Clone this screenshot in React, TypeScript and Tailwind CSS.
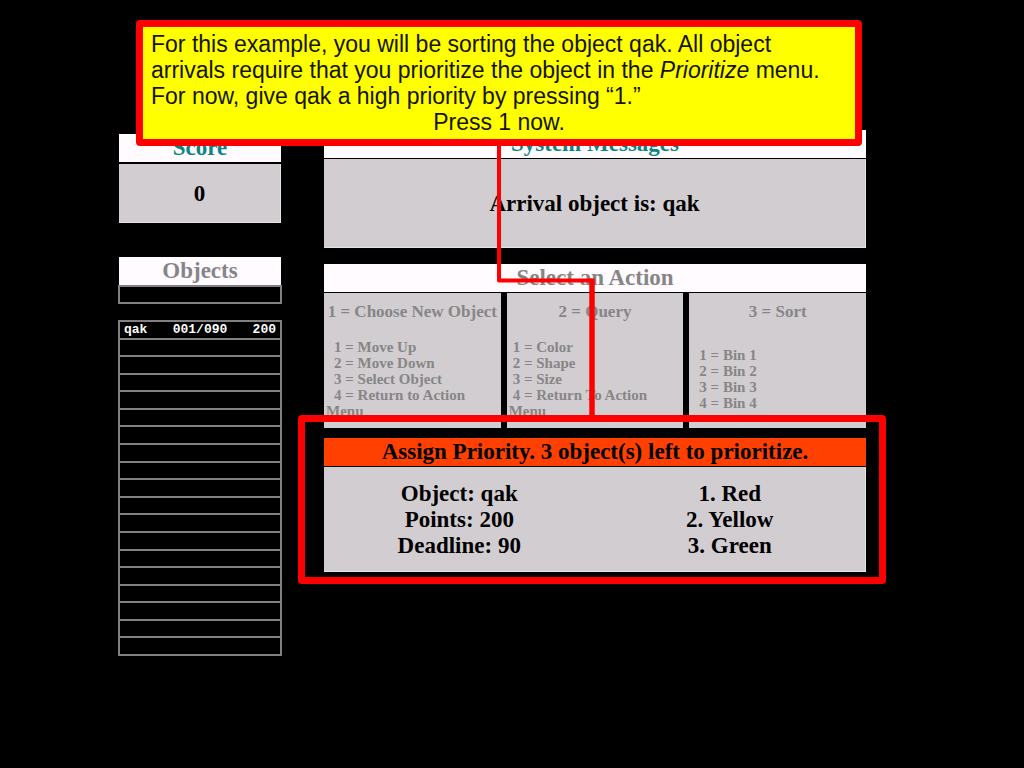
import React from "react";

const EMPTY_ROWS = 18;

const ACTIONS = [
  {
    title: "1 = Choose New Object",
    items: ["1 = Move Up", "2 = Move Down", "3 = Select Object", "4 = Return to Action Menu"],
    list: "pt-[17px] pl-0.5 pr-5 [&>li]:indent-2",
  },
  {
    title: "2 = Query",
    items: ["1 = Color", "2 = Shape", "3 = Size", "4 = Return To Action Menu"],
    list: "pt-[17px] pl-0.5 pr-5 [&>li]:indent-1",
  },
  {
    title: "3 = Sort",
    items: ["1 = Bin 1", "2 = Bin 2", "3 = Bin 3", "4 = Bin 4"],
    list: "pt-[25px] pl-2.5",
  },
];

function PanelTitle({ className, children }: { className: string; children: React.ReactNode }) {
  return <h2 className={`h-7 text-center text-[23px] leading-7 font-bold ${className}`}>{children}</h2>;
}

function ScorePanel() {
  return (
    <section className="mx-px">
      <PanelTitle className="bg-[#fffbff] text-[#0b8585]">Score</PanelTitle>
      <p className="mt-0.5 flex h-[59px] items-center justify-center border-r border-b border-[#e6e2e5] bg-[#d2cdd0] pt-0.5 text-[23px] font-bold">
        0
      </p>
    </section>
  );
}

function ObjectsPanel() {
  return (
    <section className="mt-[34px]">
      <div className="px-px">
        <PanelTitle className="bg-[#fffbff] text-[#868689]">Objects</PanelTitle>
      </div>
      <div className="h-[19px] border-2 border-[#828082]" />
      <table className="mt-4 h-[336px] w-full border-collapse border-2 border-[#828082] font-['Liberation_Mono',monospace] text-[13px] leading-[14px] font-bold text-white">
        <tbody>
          <tr className="h-[17px] border-2 border-[#828082]">
            <td className="p-0 pl-1">qak</td>
            <td className="p-0 text-center">001/090</td>
            <td className="p-0 pr-1 text-right">200</td>
          </tr>
          {Array.from({ length: EMPTY_ROWS }, (_, i) => (
            <tr key={i} className="h-[17px] border-2 border-[#828082]">
              <td colSpan={3} className="p-0" />
            </tr>
          ))}
        </tbody>
      </table>
    </section>
  );
}

function MessagesPanel() {
  return (
    <section>
      <PanelTitle className="bg-[#fffbff] text-[#0b8585]">System Messages</PanelTitle>
      <p className="mt-px flex h-[89px] items-center justify-center border-r border-b border-[#e6e2e5] bg-[#d2cdd0] pt-0.5 text-[23px] font-bold">
        Arrival object is: qak
      </p>
    </section>
  );
}

function ActionPanel() {
  return (
    <section className="mt-4 text-[#868686]">
      <PanelTitle className="bg-[#fffbff]">Select an Action</PanelTitle>
      <div className="mt-px grid grid-cols-3 gap-1.5">
        {ACTIONS.map((action) => (
          <div key={action.title} className="h-[135px] bg-[#d2cdd0] pt-[9px] font-bold">
            <h3 className="text-center text-[17px] leading-5 whitespace-nowrap">{action.title}</h3>
            <ul className={`text-[15px] leading-4 ${action.list}`}>
              {action.items.map((item) => (
                <li key={item}>{item}</li>
              ))}
            </ul>
          </div>
        ))}
      </div>
    </section>
  );
}

function PriorityPanel() {
  return (
    <section className="relative mt-2.5">
      <PanelTitle className="bg-[#ff4000] text-black">Assign Priority. 3 object(s) left to prioritize.</PanelTitle>
      <div className="mt-px grid h-[105px] grid-cols-2 border-r border-b border-[#e6e2e5] bg-[#d2cdd0] pt-3.5 text-center text-[23px] leading-[26px] font-bold">
        <div>
          <p>Object: qak</p>
          <p>Points: 200</p>
          <p>Deadline: 90</p>
        </div>
        <ol>
          <li>1. Red</li>
          <li>2. Yellow</li>
          <li>3. Green</li>
        </ol>
      </div>
      <div className="absolute -top-[23px] -right-5 -bottom-3 -left-[26px] rounded-[4px] border-[7px] border-[#ff0000]" />
    </section>
  );
}

function Callout() {
  return (
    <aside className="absolute top-5 right-[162px] left-[136px] z-10 rounded-[4px] border-[7px] border-[#ff0000] bg-[#ffff00] px-2 py-1 font-['Liberation_Sans',sans-serif] text-[23px] leading-[26px] text-[#141400]">
      <p className="pr-4">
        For this example, you will be sorting the object qak. All object arrivals require that you prioritize the object
        in the <em>Prioritize</em> menu. For now, give qak a high priority by pressing “1.”
      </p>
      <p className="text-center">Press 1 now.</p>
    </aside>
  );
}

export default function App() {
  return (
    <div className="relative min-h-screen bg-black pt-[130px] pr-[158px] pb-10 pl-[118px] font-['Liberation_Serif',serif] text-black">
      <Callout />
      <main className="flex gap-[42px]">
        <div className="w-[164px] shrink-0 pt-1">
          <ScorePanel />
          <ObjectsPanel />
        </div>
        <div className="relative flex-1">
          <MessagesPanel />
          <ActionPanel />
          <PriorityPanel />
          <svg
            className="absolute top-3 left-[170px]"
            width="104"
            height="280"
            viewBox="0 0 104 280"
            fill="none"
            stroke="#ff0000"
            strokeLinejoin="round"
            aria-hidden="true"
          >
            <path d="M5 0V138.500H98" strokeWidth="4" />
            <path d="M98 136.500V276" strokeWidth="5.500" />
          </svg>
        </div>
      </main>
    </div>
  );
}
